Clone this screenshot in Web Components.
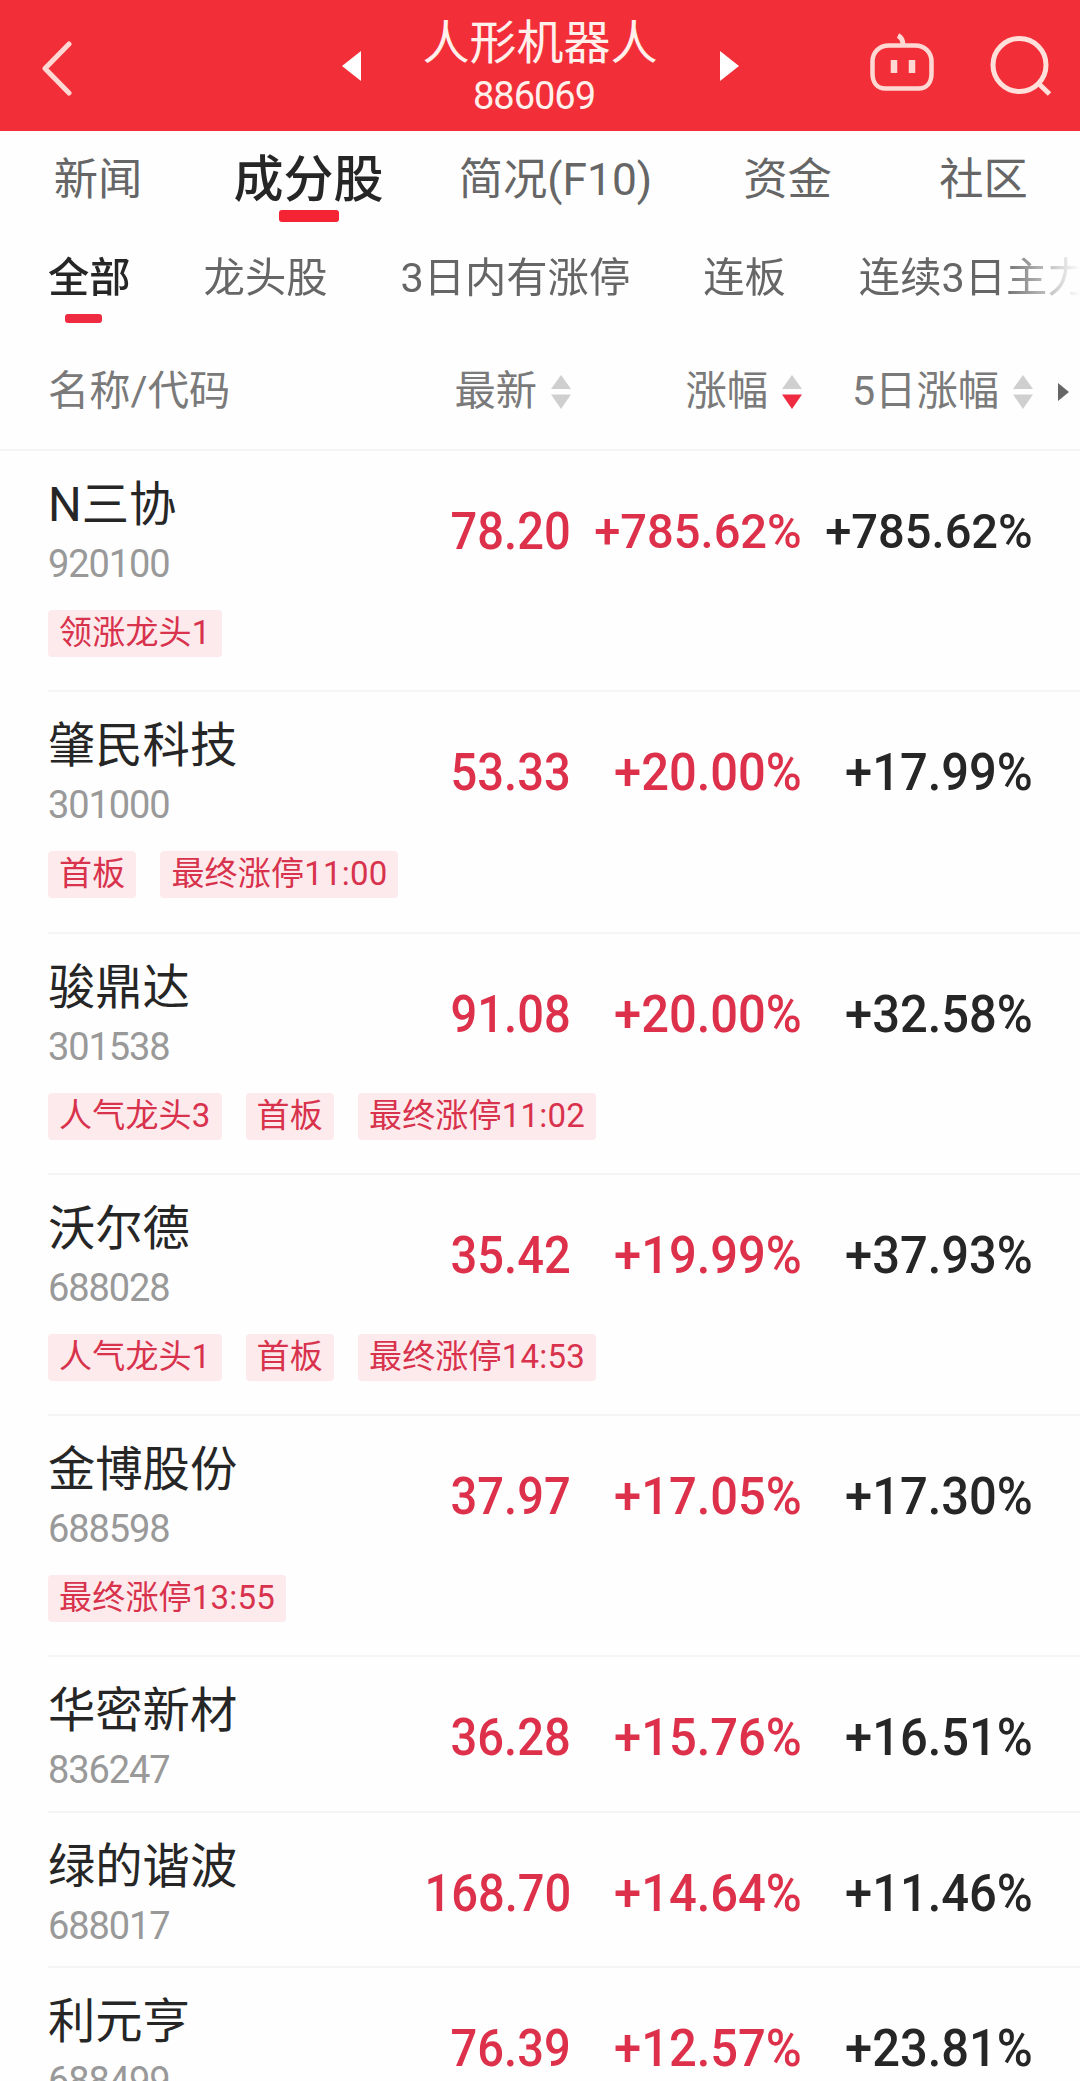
<!DOCTYPE html>
<html lang="zh-CN">
<head>
<meta charset="UTF-8">
<title>人形机器人 886069</title>
<style>
  :root {
    --red: #f22f39;
    --up: #dd304a;
    --ink: #262626;
    --cols: 322px 201px 231px 231px;
  }

  body {
    margin: 0;
    width: 1080px;
    height: 2081px;
    overflow: hidden;
    background: #fefefe;
    color: var(--ink);
    font-family: Roboto, "Noto Sans CJK SC", sans-serif;
  }
</style>
</head>
<body>
<board-header code="886069">人形机器人</board-header>
<tab-bar>
  <tab-item style="--w: 196px">新闻</tab-item>
  <tab-item style="--w: 225px" active>成分股</tab-item>
  <tab-item style="--w: 269px">简况(F10)</tab-item>
  <tab-item style="--w: 195px">资金</tab-item>
  <tab-item style="--w: 197px">社区</tab-item>
</tab-bar>
<filter-bar>
  <filter-item active>全部</filter-item>
  <filter-item>龙头股</filter-item>
  <filter-item>3日内有涨停</filter-item>
  <filter-item>连板</filter-item>
  <filter-item>连续3日主力</filter-item>
</filter-bar>
<list-head>
  <span>名称/代码</span>
  <sort-label>最新</sort-label>
  <sort-label down>涨幅</sort-label>
  <sort-label>5日涨幅</sort-label>
</list-head>
<stock-list></stock-list>

<script>
class BoardHeader extends HTMLElement {
  connectedCallback() {
    this.attachShadow({ mode: "open" });
    this.shadowRoot.innerHTML = `
    <style>
      :host {
        display: flex;
        align-items: center;
        justify-content: space-between;
        box-sizing: border-box;
        height: 131px;
        padding: 0 27px 0 38px;
        background: var(--red);
        color: #fff0ec;
      }
      svg { display: block; fill: none; }
      .side { width: 178px; }
      .icons {
        display: flex;
        justify-content: flex-end;
        gap: 52px;
        width: 189px;
      }
      .middle {
        display: flex;
        align-items: center;
        gap: 62px;
      }
      .title { text-align: center; white-space: nowrap; }
      .name {
        display: block;
        height: 54px;
        font-size: 47px;
        line-height: 57px;
        padding-top: 8px;
      }
      .code {
        height: 57px;
        padding-right: 12px;
        font-size: 38px;
        letter-spacing: -1px;
        line-height: 46px;
        padding-top: 5px;
        box-sizing: border-box;
      }
    </style>
    <div class="side">
      <svg width="40" height="60" viewBox="0 0 40 60" stroke="#ffd8d3" stroke-width="5" stroke-linecap="round" stroke-linejoin="round">
        <path d="M31 8 7 32.500 31 57"/>
      </svg>
    </div>
    <div class="middle">
      <svg width="19" height="30" viewBox="0 0 19 30"><path fill="#fff" d="M19 0v30L0 15z"/></svg>
      <div class="title">
        <span class="name"><slot></slot></span>
        <div class="code">${this.getAttribute("code")}</div>
      </div>
      <svg width="19" height="30" viewBox="0 0 19 30"><path fill="#fff" d="M0 0v30l19-15z"/></svg>
    </div>
    <div class="icons">
      <svg width="70" height="66" viewBox="0 0 70 66" stroke="#ffd8d3" stroke-width="4.500">
        <path d="M22 12.500h26c10 0 16.500 7 16.500 16v12c0 9-4.500 15-13 15h-33c-8.500 0-13-6-13-15v-12c0-9 6.500-16 16.500-16z"/>
        <path d="M31 2.500c4 2 5 5 5 10" stroke-width="5"/>
        <path d="M27 27v13M45 27v13" stroke-width="6.500"/>
      </svg>
      <svg width="64" height="66" viewBox="0 0 64 66" stroke="#ffe0db" stroke-width="5">
        <circle cx="30.500" cy="32" r="26.500"/>
        <path d="m49 50 11.500 11"/>
      </svg>
    </div>
    `;
  }
}

class TabBar extends HTMLElement {
  connectedCallback() {
    this.attachShadow({ mode: "open" });
    this.shadowRoot.innerHTML = `
    <style>
      :host { display: flex; height: 96px; }
    </style>
    <slot></slot>
    `;
  }
}

class TabItem extends HTMLElement {
  connectedCallback() {
    this.attachShadow({ mode: "open" });
    this.shadowRoot.innerHTML = `
    <style>
      :host {
        display: flex;
        flex: none;
        flex-direction: column;
        align-items: center;
        width: var(--w);
        color: #666;
        font-size: 44.300px;
        line-height: 70px;
        white-space: nowrap;
      }
      .text { height: 79px; padding-top: 14px; box-sizing: border-box; }
      :host([active]) {
        color: var(--ink);
        font-size: 50px;
        font-weight: 500;
      }
      :host([active]) .mark {
        width: 60px;
        height: 12px;
        border-radius: 3px;
        background: #f52435;
      }
    </style>
    <div class="text"><slot></slot></div>
    <div class="mark"></div>
    `;
  }
}

class FilterBar extends HTMLElement {
  connectedCallback() {
    this.attachShadow({ mode: "open" });
    this.shadowRoot.innerHTML = `
    <style>
      :host {
        display: flex;
        gap: 73px;
        height: 108px;
        padding-left: 48px;
        overflow: hidden;
        -webkit-mask-image: linear-gradient(90deg, #000 1000px, transparent 1080px);
        mask-image: linear-gradient(90deg, #000 1000px, transparent 1080px);
      }
    </style>
    <slot></slot>
    `;
  }
}

class FilterItem extends HTMLElement {
  connectedCallback() {
    this.attachShadow({ mode: "open" });
    this.shadowRoot.innerHTML = `
    <style>
      :host {
        flex: none;
        display: block;
        color: #666;
        font-size: 41.300px;
        line-height: 60px;
      }
      .text { padding-top: 21px; height: 87px; box-sizing: border-box; }
      :host([active]) { color: var(--ink); font-weight: 500; }
      :host([active]) .mark {
        width: 37px;
        height: 9px;
        margin-left: 17px;
        border-radius: 3px;
        background: #ee2b40;
      }
    </style>
    <div class="text"><slot></slot></div>
    <div class="mark"></div>
    `;
  }
}

class ListHead extends HTMLElement {
  connectedCallback() {
    this.attachShadow({ mode: "open" });
    this.shadowRoot.innerHTML = `
    <style>
      :host {
        display: grid;
        grid-template-columns: var(--cols) 1fr;
        align-items: center;
        box-sizing: border-box;
        height: 116px;
        padding: 0 11px 2px 48px;
        border-bottom: 2px solid #f3f5f5;
        color: #7a7a7a;
        font-size: 41.300px;
        line-height: 60px;
      }
      svg { justify-self: end; margin-top: 1px; }
    </style>
    <slot></slot>
    <svg width="11" height="18" viewBox="0 0 11 18"><path fill="#666" d="M0 0v18l11-9z"/></svg>
    `;
  }
}

class SortLabel extends HTMLElement {
  connectedCallback() {
    this.attachShadow({ mode: "open" });
    const down = this.hasAttribute("down") ? "#ee2b40" : "#cfcfcf";
    this.shadowRoot.innerHTML = `
    <style>
      :host {
        display: flex;
        align-items: center;
        justify-content: flex-end;
        gap: 14px;
        white-space: nowrap;
      }
      svg { margin-top: 1px; }
    </style>
    <slot></slot>
    <svg width="20" height="34" viewBox="0 0 20 34">
      <path fill="#cfcfcf" d="M10 0 20 14H0z"/>
      <path fill="${down}" d="M0 19.500h20L10 34z"/>
    </svg>
    `;
  }
}

class StockRow extends HTMLElement {
  connectedCallback() {
    this.attachShadow({ mode: "open" });
    const { name, code, price, change, five, tags } = this.stock;
    const small = change.length > 7 ? "small" : "";
    this.shadowRoot.innerHTML = `
    <style>
      :host {
        display: block;
        box-sizing: border-box;
        height: ${tags.length ? 241.300 : 155.300}px;
        margin-left: 48px;
        border-bottom: 2px solid #f5f5f5;
      }
      .main {
        display: grid;
        grid-template-columns: var(--cols);
        height: 159px;
      }
      .name {
        height: 86px;
        box-sizing: border-box;
        padding-top: 19px;
        font-size: 47.300px;
        line-height: 70px;
        white-space: nowrap;
      }
      .code {
        padding-top: 2px;
        color: #999;
        font-size: 38px;
        letter-spacing: -1.100px;
        line-height: 50px;
      }
      .num {
        justify-self: end;
        padding-top: 46px;
        color: var(--up);
        font-size: 52px;
        font-weight: 500;
        line-height: 70px;
        transform: scaleX(0.94);
        transform-origin: right;
      }
      .price { transform: scaleX(0.905); }
      .small { font-size: 48px; transform: scaleX(0.98); }
      .five { color: var(--ink); }
      .tags { display: flex; gap: 24px; }
      .tags span {
        height: 47px;
        padding: 0 11px;
        border-radius: 4px;
        background: #fdeaec;
        color: #d8324d;
        font-size: 33px;
        letter-spacing: 0.200px;
        line-height: 46px;
      }
    </style>
    <div class="main">
      <div>
        <div class="name">${name}</div>
        <div class="code">${code}</div>
      </div>
      <div class="num price">${price}</div>
      <div class="num ${small}">${change}</div>
      <div class="num five ${small}">${five}</div>
    </div>
    <div class="tags">${tags.map(t => `<span>${t}</span>`).join("")}</div>
    `;
  }
}

const STOCKS = [
  { name: "N三协", code: "920100", price: "78.20", change: "+785.62%", five: "+785.62%", tags: ["领涨龙头1"] },
  { name: "肇民科技", code: "301000", price: "53.33", change: "+20.00%", five: "+17.99%", tags: ["首板", "最终涨停11:00"] },
  { name: "骏鼎达", code: "301538", price: "91.08", change: "+20.00%", five: "+32.58%", tags: ["人气龙头3", "首板", "最终涨停11:02"] },
  { name: "沃尔德", code: "688028", price: "35.42", change: "+19.99%", five: "+37.93%", tags: ["人气龙头1", "首板", "最终涨停14:53"] },
  { name: "金博股份", code: "688598", price: "37.97", change: "+17.05%", five: "+17.30%", tags: ["最终涨停13:55"] },
  { name: "华密新材", code: "836247", price: "36.28", change: "+15.76%", five: "+16.51%", tags: [] },
  { name: "绿的谐波", code: "688017", price: "168.70", change: "+14.64%", five: "+11.46%", tags: [] },
  { name: "利元亨", code: "688499", price: "76.39", change: "+12.57%", five: "+23.81%", tags: [] },
];

class StockList extends HTMLElement {
  connectedCallback() {
    this.attachShadow({ mode: "open" });
    this.shadowRoot.innerHTML = `<style>:host { display: block; }</style>`;
    for (const stock of STOCKS) {
      const row = document.createElement("stock-row");
      row.stock = stock;
      this.shadowRoot.append(row);
    }
  }
}

customElements.define("board-header", BoardHeader);
customElements.define("tab-bar", TabBar);
customElements.define("tab-item", TabItem);
customElements.define("filter-bar", FilterBar);
customElements.define("filter-item", FilterItem);
customElements.define("list-head", ListHead);
customElements.define("sort-label", SortLabel);
customElements.define("stock-row", StockRow);
customElements.define("stock-list", StockList);
</script>
</body>
</html>
